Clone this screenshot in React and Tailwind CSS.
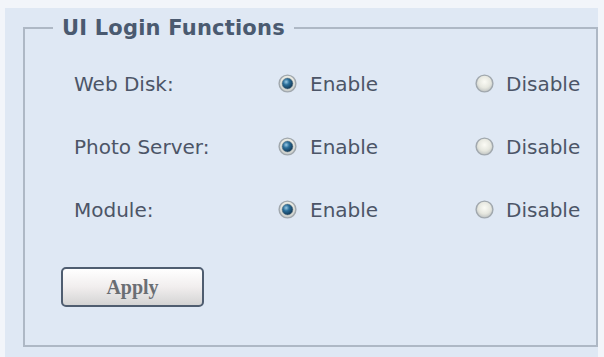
const ROWS = [
  { id: "webdisk", label: "Web Disk:" },
  { id: "photo", label: "Photo Server:" },
  { id: "module", label: "Module:" },
];

function Radio({ checked }) {
  return (
    <svg width="19" height="19" viewBox="0 0 19 19" className="shrink-0">
      <defs>
        <radialGradient id="ring" cx="50%" cy="40%" r="60%">
          <stop offset="0%" stopColor="#fbfbf5" />
          <stop offset="60%" stopColor="#e6e7df" />
          <stop offset="100%" stopColor="#bfc3c2" />
        </radialGradient>
        <radialGradient id="dot" cx="38%" cy="35%" r="70%">
          <stop offset="0%" stopColor="#9ccbe6" />
          <stop offset="40%" stopColor="#2b6f9a" />
          <stop offset="100%" stopColor="#0f3350" />
        </radialGradient>
      </defs>
      <circle cx="9.5" cy="9.5" r="8.4" fill="url(#ring)" stroke="#a1a8ae" strokeWidth="1.4" />
      {checked && <circle cx="9.5" cy="9.5" r="5.4" fill="url(#dot)" stroke="#5f7585" strokeWidth="0.6" />}
    </svg>
  );
}

export default function App() {
  return (
    <div className="h-[357px] w-[604px] overflow-hidden bg-[#f2f5fa] pl-[5px] pr-[6px] pt-[8px] font-['DejaVu_Sans',sans-serif]">
      <div className="h-full bg-[#dfe8f4] pl-[18px] pt-[8px]">
        <fieldset className="border-2 border-[#aeb8c5] px-0 pb-[38px]">
          <legend className="ml-[28px] px-[9px] text-[21px] font-bold leading-[24px] tracking-[0.2px] text-[#4a5a70]">
            UI Login Functions
          </legend>
          <div className="pl-[49px] pt-[12px]">
            {ROWS.map((row) => (
              <div key={row.id} className="flex h-[63px] items-center text-[20px] text-[#4c5567]">
                <span className="w-[204px]">{row.label}</span>
                <label className="flex w-[197px] items-center gap-[13px]">
                  <Radio checked />
                  Enable
                </label>
                <label className="flex items-center gap-[12px]">
                  <Radio checked={false} />
                  Disable
                </label>
              </div>
            ))}
            <button className="mt-[26px] h-[40px] w-[143px] -ml-[13px] rounded-[5px] border-2 border-[#4f5d70] bg-gradient-to-b from-[#ffffff] via-[#f1eeee] to-[#d4d4d4] font-['Liberation_Serif',serif] text-[20px] font-bold text-[#6a6e73]">
              Apply
            </button>
          </div>
        </fieldset>
      </div>
    </div>
  );
}
